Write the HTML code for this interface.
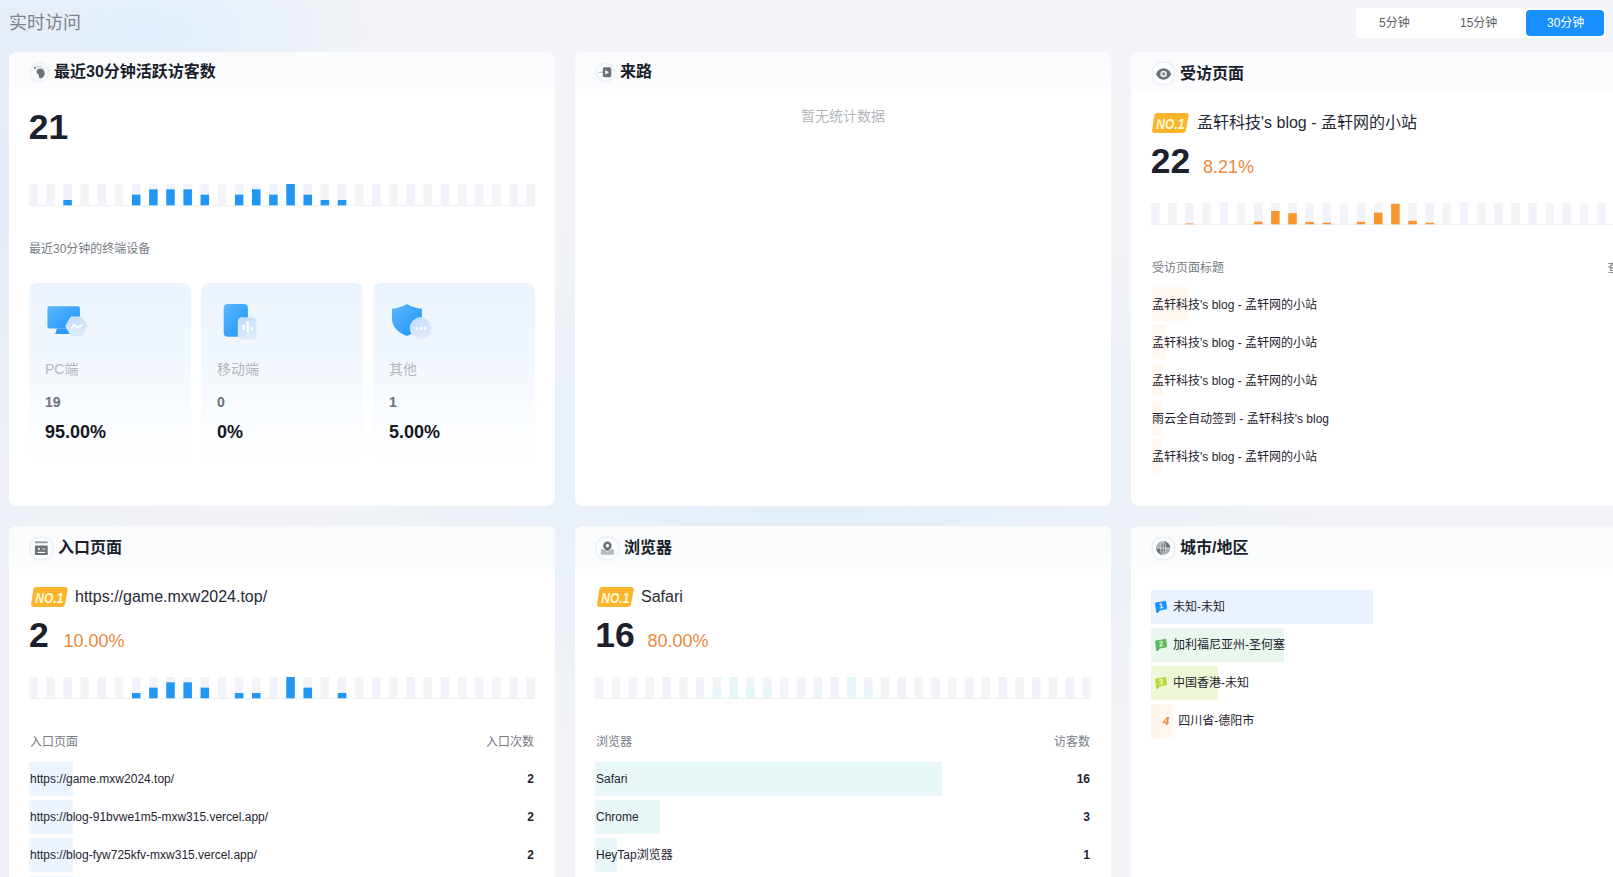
<!DOCTYPE html>
<html lang="zh-CN">
<head>
<meta charset="utf-8">
<title>实时访问</title>
<style>
*{box-sizing:border-box;margin:0;padding:0}
html,body{width:1613px;height:877px;overflow:hidden}
body{position:relative;font-family:"Liberation Sans","Noto Sans CJK SC",sans-serif;color:#1f2430;
background:
 radial-gradient(ellipse 240px 120px at 140px 34px, #e1eefb 0%, rgba(225,238,251,0) 100%),
 radial-gradient(ellipse 130px 300px at 0px 190px, #e4e9f8 0%, rgba(228,233,248,0) 100%),
 radial-gradient(ellipse 540px 300px at 810px 480px, #e2eefa 0%, rgba(226,238,250,0) 100%),
 linear-gradient(90deg,#eef1f7 0px,#f3f4f7 320px,#f3f4f7 100%);
}
.t{position:absolute;white-space:nowrap;line-height:1}
.card{position:absolute;background:#fff;border-radius:8px;overflow:hidden}
.hd{position:absolute;left:0;top:0;right:0;background:linear-gradient(180deg,#f9fbfd 0%,#fafcfe 82%,#ffffff 100%)}
.h40{height:40.500px}.h43{height:44.500px}
.chart{position:absolute;display:block}
.ic{position:absolute;border-radius:50%;background:#fcfdfe;border:1px solid #eceff3;box-shadow:0 0 2px rgba(200,205,215,.35)}
.ttl{font-size:16px;font-weight:bold;color:#1a1e2b}
.big{font-size:35.5px;font-weight:bold;color:#1b202c;letter-spacing:0}
.pct{font-size:18px;color:#ee8a3c}
.top1{font-size:16px;color:#252a36}
.th{font-size:12px;color:#767b85}
.td{font-size:12px;color:#1f2430}
.num{font-size:12px;font-weight:bold;color:#1f2430;text-align:right}
.rowbg{position:absolute;height:34px}
.badge{position:absolute;width:37px;height:20px}
.dev{position:absolute;width:162px;height:182px;top:283px;border-radius:8px;background:linear-gradient(180deg,#ebf4fd 0%,#f1f7fe 40%,#f9fcff 72%,#ffffff 100%)}
.seg{position:absolute;left:1356px;top:8px;width:250px;height:30px;background:#fff;border-radius:4px}
.segon{position:absolute;left:1526px;top:10px;width:78px;height:26px;background:#1890ff;border-radius:4px}
.st{font-size:12px;color:#5a5e66}

</style>
</head>
<body>
<div class="t" style="left:9px;top:14px;font-size:18px;color:#7d828a">实时访问</div>
<div class="seg"></div><div class="segon"></div>
<div class="t st" style="left:1379px;top:17px">5分钟</div>
<div class="t st" style="left:1460px;top:17px">15分钟</div>
<div class="t st" style="left:1547px;top:17px;color:#fff">30分钟</div>

<!-- card 1 -->
<div class="card" style="left:9px;top:52px;width:546px;height:454px"><div class="hd h40"></div></div>
<div class="ic" style="left:29.500px;top:62.500px;width:19px;height:19px"></div>
<svg class="chart" style="left:33px;top:65px" width="14" height="15" viewBox="0 0 14 15"><path d="M6.900 3.600C4.600 3.600 3.300 5.400 3.500 7.200C3.700 8.600 5.400 9 5.800 10.100C6.200 11.300 5.600 13.400 7.400 13.400C9.700 13.400 11.700 10.800 11.700 8.200C11.700 5.600 9.800 3.600 6.900 3.600Z" fill="#6d7078"/><circle cx="2.100" cy="2.900" r="1.300" fill="#9a9da4"/><circle cx="4.800" cy="1.500" r="0.850" fill="#a5a8ae"/><circle cx="7" cy="1.100" r="0.700" fill="#adb0b5"/><circle cx="9" cy="1.900" r="0.700" fill="#adb0b5"/><circle cx="11" cy="3.300" r="0.600" fill="#b0b3b8"/></svg>
<div class="t ttl" style="left:54px;top:64px">最近30分钟活跃访客数</div>
<div class="t big" style="left:28.800px;top:110px">21</div>
<svg class="chart" style="left:29.2px;top:184px" width="506.0" height="23.3" viewBox="0 0 506.0 23.3">
<rect x="0.00" y="0" width="8.5" height="21.3" fill="#f2f3fa"/>
<rect x="17.16" y="0" width="8.5" height="21.3" fill="#f3f4f7"/>
<rect x="34.31" y="0" width="8.5" height="21.3" fill="#f2f3fa"/>
<rect x="51.47" y="0" width="8.5" height="21.3" fill="#f3f4f7"/>
<rect x="68.62" y="0" width="8.5" height="21.3" fill="#f2f3fa"/>
<rect x="85.78" y="0" width="8.5" height="21.3" fill="#f3f4f7"/>
<rect x="102.93" y="0" width="8.5" height="21.3" fill="#f2f3fa"/>
<rect x="120.09" y="0" width="8.5" height="21.3" fill="#f3f4f7"/>
<rect x="137.24" y="0" width="8.5" height="21.3" fill="#f2f3fa"/>
<rect x="154.40" y="0" width="8.5" height="21.3" fill="#f3f4f7"/>
<rect x="171.55" y="0" width="8.5" height="21.3" fill="#f2f3fa"/>
<rect x="188.71" y="0" width="8.5" height="21.3" fill="#f3f4f7"/>
<rect x="205.86" y="0" width="8.5" height="21.3" fill="#f2f3fa"/>
<rect x="223.02" y="0" width="8.5" height="21.3" fill="#f3f4f7"/>
<rect x="240.17" y="0" width="8.5" height="21.3" fill="#f2f3fa"/>
<rect x="257.33" y="0" width="8.5" height="21.3" fill="#f3f4f7"/>
<rect x="274.48" y="0" width="8.5" height="21.3" fill="#f2f3fa"/>
<rect x="291.64" y="0" width="8.5" height="21.3" fill="#f3f4f7"/>
<rect x="308.79" y="0" width="8.5" height="21.3" fill="#f2f3fa"/>
<rect x="325.95" y="0" width="8.5" height="21.3" fill="#f3f4f7"/>
<rect x="343.10" y="0" width="8.5" height="21.3" fill="#f2f3fa"/>
<rect x="360.26" y="0" width="8.5" height="21.3" fill="#f3f4f7"/>
<rect x="377.41" y="0" width="8.5" height="21.3" fill="#f2f3fa"/>
<rect x="394.57" y="0" width="8.5" height="21.3" fill="#f3f4f7"/>
<rect x="411.72" y="0" width="8.5" height="21.3" fill="#f2f3fa"/>
<rect x="428.88" y="0" width="8.5" height="21.3" fill="#f3f4f7"/>
<rect x="446.03" y="0" width="8.5" height="21.3" fill="#f2f3fa"/>
<rect x="463.19" y="0" width="8.5" height="21.3" fill="#f3f4f7"/>
<rect x="480.34" y="0" width="8.5" height="21.3" fill="#f2f3fa"/>
<rect x="497.50" y="0" width="8.5" height="21.3" fill="#f3f4f7"/>
<rect x="0" y="21.1" width="506.0" height="1" fill="#edeff3"/>
<rect x="34.31" y="15.98" width="8.5" height="5.33" fill="#2196f3"/>
<rect x="102.93" y="10.65" width="8.5" height="10.65" fill="#2196f3"/>
<rect x="120.09" y="5.32" width="8.5" height="15.98" fill="#2196f3"/>
<rect x="137.24" y="5.32" width="8.5" height="15.98" fill="#2196f3"/>
<rect x="154.40" y="5.32" width="8.5" height="15.98" fill="#2196f3"/>
<rect x="171.55" y="10.65" width="8.5" height="10.65" fill="#2196f3"/>
<rect x="205.86" y="10.65" width="8.5" height="10.65" fill="#2196f3"/>
<rect x="223.02" y="5.32" width="8.5" height="15.98" fill="#2196f3"/>
<rect x="240.17" y="10.65" width="8.5" height="10.65" fill="#2196f3"/>
<rect x="257.33" y="0.00" width="8.5" height="21.30" fill="#2196f3"/>
<rect x="274.48" y="10.65" width="8.5" height="10.65" fill="#2196f3"/>
<rect x="291.64" y="15.98" width="8.5" height="5.33" fill="#2196f3"/>
<rect x="308.79" y="15.98" width="8.5" height="5.33" fill="#2196f3"/>
</svg>
<div class="t th" style="left:29px;top:243px">最近30分钟的终端设备</div>
<div class="dev" style="left:29px"></div>
<div class="dev" style="left:201px"></div>
<div class="dev" style="left:373px"></div>
<!-- device icons -->
<svg class="chart" style="left:44px;top:302px" width="48" height="42" viewBox="0 0 48 42">
<defs><linearGradient id="gb" x1="0" y1="0" x2="1" y2="1"><stop offset="0" stop-color="#5ab8ff"/><stop offset="1" stop-color="#1f93f7"/></linearGradient>
<linearGradient id="gl" x1="0" y1="0" x2="0" y2="1"><stop offset="0" stop-color="#cadffa"/><stop offset="1" stop-color="#deeafc"/></linearGradient></defs>
<rect x="3.400" y="4.200" width="32.500" height="22.300" rx="2.200" fill="url(#gb)"/>
<path d="M13 26.400h11l1.700 5.500H11.100z" fill="#2a9af8"/>
<path d="M43 24.200L37.750 33.300H27.250L22 24.200L27.250 15.100H37.750z" fill="url(#gl)" stroke="#d6e6fb" stroke-width="1.400" stroke-linejoin="round" fill-opacity=".97"/>
<path d="M27.900 25.900l2.300-3.400 2.900 3.400 5.100-2.800" fill="none" stroke="#fff" stroke-width="1.700" stroke-linecap="round" stroke-linejoin="round"/>
</svg>
<svg class="chart" style="left:216px;top:300px" width="48" height="44" viewBox="0 0 48 44">
<rect x="7.700" y="4" width="24.200" height="32.800" rx="4" fill="url(#gb)"/>
<rect x="22" y="17.400" width="18.200" height="22" rx="4" fill="url(#gl)" fill-opacity=".96" stroke="#e6f0fd" stroke-width=".4"/>
<rect x="26.600" y="24.500" width="2.200" height="6.200" rx="1.100" fill="#fff"/><rect x="30.600" y="21" width="2.200" height="12" rx="1.100" fill="#fff"/><rect x="34.600" y="26.500" width="2.200" height="4" rx="1.100" fill="#fff" fill-opacity=".85"/><circle cx="31.700" cy="35.700" r="1" fill="#fff"/>
</svg>
<svg class="chart" style="left:388px;top:300px" width="48" height="44" viewBox="0 0 48 44">
<path d="M4 8.800C9.500 8.200 15 6.500 18.900 4C22.800 6.500 28.400 8.200 33.900 8.800V19C33.900 27.500 27 33 18.900 36C10.900 33 4 27.500 4 19Z" fill="url(#gb)"/>
<circle cx="32.800" cy="28.200" r="10.700" fill="url(#gl)" fill-opacity=".96" stroke="#e6f0fd" stroke-width=".5"/>
<circle cx="28.600" cy="28.400" r="1.300" fill="#fff"/><circle cx="32.800" cy="28.400" r="1.300" fill="#fff"/><circle cx="37" cy="28.400" r="1.300" fill="#fff"/>
</svg>
<div class="t" style="left:45px;top:362px;font-size:14px;color:#b3b6bc">PC端</div>
<div class="t" style="left:217px;top:362px;font-size:14px;color:#b3b6bc">移动端</div>
<div class="t" style="left:389px;top:362px;font-size:14px;color:#b3b6bc">其他</div>
<div class="t" style="left:45px;top:395px;font-size:14px;font-weight:bold;color:#6b707b">19</div>
<div class="t" style="left:217px;top:395px;font-size:14px;font-weight:bold;color:#6b707b">0</div>
<div class="t" style="left:389px;top:395px;font-size:14px;font-weight:bold;color:#6b707b">1</div>
<div class="t" style="left:45px;top:423px;font-size:18px;font-weight:bold;color:#14171f">95.00%</div>
<div class="t" style="left:217px;top:423px;font-size:18px;font-weight:bold;color:#14171f">0%</div>
<div class="t" style="left:389px;top:423px;font-size:18px;font-weight:bold;color:#14171f">5.00%</div>

<!-- card 2 -->
<div class="card" style="left:575px;top:52px;width:536px;height:454px"><div class="hd h40"></div></div>
<div class="ic" style="left:595.800px;top:62.500px;width:19px;height:19px"></div>
<svg class="chart" style="left:597px;top:65px" width="16" height="14" viewBox="0 0 16 14"><path d="M1.300 7.300h5" stroke="#b9bcc2" stroke-width="1" fill="none"/><rect x="5.800" y="2.300" width="8.500" height="9.900" rx="1.600" fill="#6d7078"/><path d="M8.300 5l3.600 2.300-3.600 2.300z" fill="#fff"/></svg>
<div class="t ttl" style="left:620px;top:64px">来路</div>
<div class="t" style="left:801px;top:109px;font-size:14px;color:#b3b6bc">暂无统计数据</div>

<!-- card 3 -->
<div class="card" style="left:1131px;top:52px;width:546px;height:454px"><div class="hd h43"></div></div>
<div class="ic" style="left:1151.800px;top:62.300px;width:23px;height:23px;border-radius:10px"></div>
<svg class="chart" style="left:1155px;top:67px" width="17" height="14" viewBox="0 0 17 14"><path d="M.9 7C2.600 3.500 5.300 1.300 8.600 1.300S14.600 3.500 16.300 7c-1.700 3.500-4.400 5.700-7.700 5.700S2.600 10.500.9 7z" fill="#6d7078"/><circle cx="8.600" cy="7" r="3.300" fill="#e9ebee"/><circle cx="8.600" cy="7" r="1.700" fill="#8e9198"/></svg>
<div class="t ttl" style="left:1180px;top:66px">受访页面</div>
<svg class="badge" style="left:1152px;top:113px" viewBox="0 0 37 20"><path d="M4.800 0H34.300a2.400 2.400 0 0 1 2.350 2.900L33.900 17.500a3 3 0 0 1-2.900 2.500H2.500a2.400 2.400 0 0 1-2.350-2.900L2.300 2.300A3 3 0 0 1 4.800 0z" fill="#fbb42e"/><text transform="translate(18.300 15.800) scale(.8 1)" text-anchor="middle" font-family="Liberation Sans, sans-serif" font-size="15" font-weight="bold" font-style="italic" fill="#fffad4">NO.1</text></svg>
<div class="t top1" style="left:1197px;top:115px">孟轩科技's blog - 孟轩网的小站</div>
<div class="t big" style="left:1150.700px;top:144px">22</div>
<div class="t pct" style="left:1203px;top:157.500px">8.21%</div>
<svg class="chart" style="left:1151.4px;top:203px" width="506.0" height="23.3" viewBox="0 0 506.0 23.3">
<rect x="0.00" y="0" width="8.5" height="21.3" fill="#f2f3fa"/>
<rect x="17.16" y="0" width="8.5" height="21.3" fill="#f3f4f7"/>
<rect x="34.31" y="0" width="8.5" height="21.3" fill="#f2f3fa"/>
<rect x="51.47" y="0" width="8.5" height="21.3" fill="#f3f4f7"/>
<rect x="68.62" y="0" width="8.5" height="21.3" fill="#f2f3fa"/>
<rect x="85.78" y="0" width="8.5" height="21.3" fill="#f3f4f7"/>
<rect x="102.93" y="0" width="8.5" height="21.3" fill="#f2f3fa"/>
<rect x="120.09" y="0" width="8.5" height="21.3" fill="#f3f4f7"/>
<rect x="137.24" y="0" width="8.5" height="21.3" fill="#f2f3fa"/>
<rect x="154.40" y="0" width="8.5" height="21.3" fill="#f3f4f7"/>
<rect x="171.55" y="0" width="8.5" height="21.3" fill="#f2f3fa"/>
<rect x="188.71" y="0" width="8.5" height="21.3" fill="#f3f4f7"/>
<rect x="205.86" y="0" width="8.5" height="21.3" fill="#f2f3fa"/>
<rect x="223.02" y="0" width="8.5" height="21.3" fill="#f3f4f7"/>
<rect x="240.17" y="0" width="8.5" height="21.3" fill="#f2f3fa"/>
<rect x="257.33" y="0" width="8.5" height="21.3" fill="#f3f4f7"/>
<rect x="274.48" y="0" width="8.5" height="21.3" fill="#f2f3fa"/>
<rect x="291.64" y="0" width="8.5" height="21.3" fill="#f3f4f7"/>
<rect x="308.79" y="0" width="8.5" height="21.3" fill="#f2f3fa"/>
<rect x="325.95" y="0" width="8.5" height="21.3" fill="#f3f4f7"/>
<rect x="343.10" y="0" width="8.5" height="21.3" fill="#f2f3fa"/>
<rect x="360.26" y="0" width="8.5" height="21.3" fill="#f3f4f7"/>
<rect x="377.41" y="0" width="8.5" height="21.3" fill="#f2f3fa"/>
<rect x="394.57" y="0" width="8.5" height="21.3" fill="#f3f4f7"/>
<rect x="411.72" y="0" width="8.5" height="21.3" fill="#f2f3fa"/>
<rect x="428.88" y="0" width="8.5" height="21.3" fill="#f3f4f7"/>
<rect x="446.03" y="0" width="8.5" height="21.3" fill="#f2f3fa"/>
<rect x="463.19" y="0" width="8.5" height="21.3" fill="#f3f4f7"/>
<rect x="480.34" y="0" width="8.5" height="21.3" fill="#f2f3fa"/>
<rect x="497.50" y="0" width="8.5" height="21.3" fill="#f3f4f7"/>
<rect x="0" y="21.1" width="506.0" height="1" fill="#edeff3"/>
<rect x="34.31" y="20.50" width="8.5" height="0.80" fill="#f7962f"/>
<rect x="102.93" y="18.64" width="8.5" height="2.66" fill="#f7962f"/>
<rect x="120.09" y="7.99" width="8.5" height="13.31" fill="#f7962f"/>
<rect x="137.24" y="10.12" width="8.5" height="11.18" fill="#f7962f"/>
<rect x="154.40" y="18.90" width="8.5" height="2.40" fill="#f7962f"/>
<rect x="171.55" y="19.70" width="8.5" height="1.60" fill="#f7962f"/>
<rect x="205.86" y="18.90" width="8.5" height="2.40" fill="#f7962f"/>
<rect x="223.02" y="9.58" width="8.5" height="11.72" fill="#f7962f"/>
<rect x="240.17" y="0.80" width="8.5" height="20.50" fill="#f7962f"/>
<rect x="257.33" y="17.84" width="8.5" height="3.46" fill="#f7962f"/>
<rect x="274.48" y="19.70" width="8.5" height="1.60" fill="#f7962f"/>
</svg>
<div class="t th" style="left:1152px;top:262px">受访页面标题</div>
<div class="t th" style="left:1607.400px;top:262px">查看次数</div>
<div class="rowbg" style="left:1152px;top:287px;width:36px;background:#fff8f0"></div>
<div class="rowbg" style="left:1152px;top:325px;width:13.500px;background:#fff8f0"></div>
<div class="rowbg" style="left:1152px;top:363px;width:11px;background:#fff8f0"></div>
<div class="rowbg" style="left:1152px;top:401px;width:10px;background:#fff8f0"></div>
<div class="rowbg" style="left:1152px;top:439px;width:8.500px;background:#fff8f0"></div>
<div class="t td" style="left:1152px;top:299px">孟轩科技's blog - 孟轩网的小站</div>
<div class="t td" style="left:1152px;top:337px">孟轩科技's blog - 孟轩网的小站</div>
<div class="t td" style="left:1152px;top:375px">孟轩科技's blog - 孟轩网的小站</div>
<div class="t td" style="left:1152px;top:413px">雨云全自动签到 - 孟轩科技's blog</div>
<div class="t td" style="left:1152px;top:451px">孟轩科技's blog - 孟轩网的小站</div>

<!-- card 4 -->
<div class="card" style="left:9px;top:526px;width:546px;height:400px"><div class="hd h43"></div></div>
<div class="ic" style="left:30px;top:536.500px;width:23px;height:23px;border-radius:10px"></div>
<svg class="chart" style="left:34px;top:540px" width="15" height="16" viewBox="0 0 15 16"><rect x=".9" y="1.200" width="12.800" height="2.100" rx=".5" fill="#9b9ea5"/><rect x=".9" y="5.500" width="12.800" height="9.500" rx=".6" fill="#6d7078"/><circle cx="5" cy="9" r="1.100" fill="#fff"/><rect x="8" y="8.400" width="3.200" height="1.100" fill="#d9dbde"/><rect x="3.600" y="11.800" width="7.600" height="1.200" fill="#fff"/></svg>
<div class="t ttl" style="left:58px;top:540px">入口页面</div>
<svg class="badge" style="left:30.500px;top:587px" viewBox="0 0 37 20"><path d="M4.800 0H34.300a2.400 2.400 0 0 1 2.350 2.900L33.900 17.500a3 3 0 0 1-2.900 2.500H2.500a2.400 2.400 0 0 1-2.350-2.900L2.300 2.300A3 3 0 0 1 4.800 0z" fill="#fbb42e"/><text transform="translate(18.300 15.800) scale(.8 1)" text-anchor="middle" font-family="Liberation Sans, sans-serif" font-size="15" font-weight="bold" font-style="italic" fill="#fffad4">NO.1</text></svg>
<div class="t top1" style="left:75px;top:589px">https://game.mxw2024.top/</div>
<div class="t big" style="left:29px;top:618px">2</div>
<div class="t pct" style="left:63.500px;top:632px">10.00%</div>
<svg class="chart" style="left:29.2px;top:677px" width="506.0" height="23.3" viewBox="0 0 506.0 23.3">
<rect x="0.00" y="0" width="8.5" height="21.3" fill="#f2f3fa"/>
<rect x="17.16" y="0" width="8.5" height="21.3" fill="#f3f4f7"/>
<rect x="34.31" y="0" width="8.5" height="21.3" fill="#f2f3fa"/>
<rect x="51.47" y="0" width="8.5" height="21.3" fill="#f3f4f7"/>
<rect x="68.62" y="0" width="8.5" height="21.3" fill="#f2f3fa"/>
<rect x="85.78" y="0" width="8.5" height="21.3" fill="#f3f4f7"/>
<rect x="102.93" y="0" width="8.5" height="21.3" fill="#f2f3fa"/>
<rect x="120.09" y="0" width="8.5" height="21.3" fill="#f3f4f7"/>
<rect x="137.24" y="0" width="8.5" height="21.3" fill="#f2f3fa"/>
<rect x="154.40" y="0" width="8.5" height="21.3" fill="#f3f4f7"/>
<rect x="171.55" y="0" width="8.5" height="21.3" fill="#f2f3fa"/>
<rect x="188.71" y="0" width="8.5" height="21.3" fill="#f3f4f7"/>
<rect x="205.86" y="0" width="8.5" height="21.3" fill="#f2f3fa"/>
<rect x="223.02" y="0" width="8.5" height="21.3" fill="#f3f4f7"/>
<rect x="240.17" y="0" width="8.5" height="21.3" fill="#f2f3fa"/>
<rect x="257.33" y="0" width="8.5" height="21.3" fill="#f3f4f7"/>
<rect x="274.48" y="0" width="8.5" height="21.3" fill="#f2f3fa"/>
<rect x="291.64" y="0" width="8.5" height="21.3" fill="#f3f4f7"/>
<rect x="308.79" y="0" width="8.5" height="21.3" fill="#f2f3fa"/>
<rect x="325.95" y="0" width="8.5" height="21.3" fill="#f3f4f7"/>
<rect x="343.10" y="0" width="8.5" height="21.3" fill="#f2f3fa"/>
<rect x="360.26" y="0" width="8.5" height="21.3" fill="#f3f4f7"/>
<rect x="377.41" y="0" width="8.5" height="21.3" fill="#f2f3fa"/>
<rect x="394.57" y="0" width="8.5" height="21.3" fill="#f3f4f7"/>
<rect x="411.72" y="0" width="8.5" height="21.3" fill="#f2f3fa"/>
<rect x="428.88" y="0" width="8.5" height="21.3" fill="#f3f4f7"/>
<rect x="446.03" y="0" width="8.5" height="21.3" fill="#f2f3fa"/>
<rect x="463.19" y="0" width="8.5" height="21.3" fill="#f3f4f7"/>
<rect x="480.34" y="0" width="8.5" height="21.3" fill="#f2f3fa"/>
<rect x="497.50" y="0" width="8.5" height="21.3" fill="#f3f4f7"/>
<rect x="0" y="21.1" width="506.0" height="1" fill="#edeff3"/>
<rect x="102.93" y="15.98" width="8.5" height="5.33" fill="#2196f3"/>
<rect x="120.09" y="10.65" width="8.5" height="10.65" fill="#2196f3"/>
<rect x="137.24" y="5.32" width="8.5" height="15.98" fill="#2196f3"/>
<rect x="154.40" y="5.32" width="8.5" height="15.98" fill="#2196f3"/>
<rect x="171.55" y="10.65" width="8.5" height="10.65" fill="#2196f3"/>
<rect x="205.86" y="15.98" width="8.5" height="5.33" fill="#2196f3"/>
<rect x="223.02" y="15.98" width="8.5" height="5.33" fill="#2196f3"/>
<rect x="257.33" y="0.00" width="8.5" height="21.30" fill="#2196f3"/>
<rect x="274.48" y="10.65" width="8.5" height="10.65" fill="#2196f3"/>
<rect x="308.79" y="15.98" width="8.5" height="5.33" fill="#2196f3"/>
</svg>
<div class="t th" style="left:30px;top:736px">入口页面</div>
<div class="t th" style="left:486px;top:736px">入口次数</div>
<div class="rowbg" style="left:29px;top:762px;width:44px;background:#ecf4fe"></div>
<div class="rowbg" style="left:29px;top:800px;width:44px;background:#ecf4fe"></div>
<div class="rowbg" style="left:29px;top:838px;width:44px;background:#ecf4fe"></div>
<div class="rowbg" style="left:29px;top:876px;width:44px;background:#ecf4fe"></div>
<div class="t td" style="left:30px;top:773px">https://game.mxw2024.top/</div>
<div class="t td" style="left:30px;top:811px">https://blog-91bvwe1m5-mxw315.vercel.app/</div>
<div class="t td" style="left:30px;top:849px">https://blog-fyw725kfv-mxw315.vercel.app/</div>
<div class="t td" style="left:30px;top:887px">https://blog.mxw2024.top/</div>
<div class="t num" style="left:504px;width:30px;top:773px">2</div>
<div class="t num" style="left:504px;width:30px;top:811px">2</div>
<div class="t num" style="left:504px;width:30px;top:849px">2</div>

<!-- card 5 -->
<div class="card" style="left:575px;top:526px;width:536px;height:400px"><div class="hd h43"></div></div>
<div class="ic" style="left:596px;top:536.500px;width:23px;height:23px;border-radius:10px"></div>
<svg class="chart" style="left:600px;top:540px" width="15" height="16" viewBox="0 0 15 16"><path d="M.9 8.800l4 1.200 2.500 2.600 2.500-2.600 4-1.200v6H.9z" fill="#b4b7bc"/><path d="M7.400 1.500a4.200 4.200 0 0 1 4.200 4.200c0 2.300-2.200 4.200-4.200 5.500C5.400 9.900 3.200 8 3.200 5.700A4.200 4.200 0 0 1 7.400 1.500z" fill="#6d7078"/><circle cx="7.400" cy="5.700" r="1.700" fill="#fff"/></svg>
<div class="t ttl" style="left:624px;top:540px">浏览器</div>
<svg class="badge" style="left:596.500px;top:587px" viewBox="0 0 37 20"><path d="M4.800 0H34.300a2.400 2.400 0 0 1 2.350 2.900L33.900 17.500a3 3 0 0 1-2.900 2.500H2.500a2.400 2.400 0 0 1-2.350-2.900L2.300 2.300A3 3 0 0 1 4.800 0z" fill="#fbb42e"/><text transform="translate(18.300 15.800) scale(.8 1)" text-anchor="middle" font-family="Liberation Sans, sans-serif" font-size="15" font-weight="bold" font-style="italic" fill="#fffad4">NO.1</text></svg>
<div class="t top1" style="left:641px;top:589px">Safari</div>
<div class="t big" style="left:595.300px;top:618px">16</div>
<div class="t pct" style="left:647.500px;top:632px">80.00%</div>
<svg class="chart" style="left:595.2px;top:677px" width="496.0" height="23.3" viewBox="0 0 496.0 23.3">
<rect x="0.00" y="0" width="8.5" height="21.3" fill="#f2f3fa"/>
<rect x="16.81" y="0" width="8.5" height="21.3" fill="#f3f4f7"/>
<rect x="33.62" y="0" width="8.5" height="21.3" fill="#f2f3fa"/>
<rect x="50.43" y="0" width="8.5" height="21.3" fill="#f3f4f7"/>
<rect x="67.24" y="0" width="8.5" height="21.3" fill="#f2f3fa"/>
<rect x="84.05" y="0" width="8.5" height="21.3" fill="#f3f4f7"/>
<rect x="100.86" y="0" width="8.5" height="21.3" fill="#f2f3fa"/>
<rect x="117.67" y="0" width="8.5" height="21.3" fill="#f3f4f7"/>
<rect x="134.48" y="0" width="8.5" height="21.3" fill="#f2f3fa"/>
<rect x="151.29" y="0" width="8.5" height="21.3" fill="#f3f4f7"/>
<rect x="168.10" y="0" width="8.5" height="21.3" fill="#f2f3fa"/>
<rect x="184.91" y="0" width="8.5" height="21.3" fill="#f3f4f7"/>
<rect x="201.72" y="0" width="8.5" height="21.3" fill="#f2f3fa"/>
<rect x="218.53" y="0" width="8.5" height="21.3" fill="#f3f4f7"/>
<rect x="235.34" y="0" width="8.5" height="21.3" fill="#f2f3fa"/>
<rect x="252.16" y="0" width="8.5" height="21.3" fill="#f3f4f7"/>
<rect x="268.97" y="0" width="8.5" height="21.3" fill="#f2f3fa"/>
<rect x="285.78" y="0" width="8.5" height="21.3" fill="#f3f4f7"/>
<rect x="302.59" y="0" width="8.5" height="21.3" fill="#f2f3fa"/>
<rect x="319.40" y="0" width="8.5" height="21.3" fill="#f3f4f7"/>
<rect x="336.21" y="0" width="8.5" height="21.3" fill="#f2f3fa"/>
<rect x="353.02" y="0" width="8.5" height="21.3" fill="#f3f4f7"/>
<rect x="369.83" y="0" width="8.5" height="21.3" fill="#f2f3fa"/>
<rect x="386.64" y="0" width="8.5" height="21.3" fill="#f3f4f7"/>
<rect x="403.45" y="0" width="8.5" height="21.3" fill="#f2f3fa"/>
<rect x="420.26" y="0" width="8.5" height="21.3" fill="#f3f4f7"/>
<rect x="437.07" y="0" width="8.5" height="21.3" fill="#f2f3fa"/>
<rect x="453.88" y="0" width="8.5" height="21.3" fill="#f3f4f7"/>
<rect x="470.69" y="0" width="8.5" height="21.3" fill="#f2f3fa"/>
<rect x="487.50" y="0" width="8.5" height="21.3" fill="#f3f4f7"/>
<rect x="0" y="21.1" width="496.0" height="1" fill="#edeff3"/>
<rect x="117.67" y="10.65" width="8.5" height="10.65" fill="#e7f6f6"/>
<rect x="134.48" y="0.00" width="8.5" height="21.30" fill="#e7f6f6"/>
<rect x="151.29" y="5.32" width="8.5" height="15.98" fill="#e7f6f6"/>
<rect x="168.10" y="10.65" width="8.5" height="10.65" fill="#e7f6f6"/>
<rect x="218.53" y="15.98" width="8.5" height="5.33" fill="#e7f6f6"/>
<rect x="252.16" y="0.00" width="8.5" height="21.30" fill="#e7f6f6"/>
<rect x="268.97" y="10.65" width="8.5" height="10.65" fill="#e7f6f6"/>
</svg>
<div class="t th" style="left:596px;top:736px">浏览器</div>
<div class="t th" style="left:1054px;top:736px">访客数</div>
<div class="rowbg" style="left:595px;top:762px;width:346.500px;background:#e8f8f8"></div>
<div class="rowbg" style="left:595px;top:800px;width:65px;background:#e8f8f8"></div>
<div class="rowbg" style="left:595px;top:838px;width:21.600px;background:#e8f8f8"></div>
<div class="t td" style="left:596px;top:773px">Safari</div>
<div class="t td" style="left:596px;top:811px">Chrome</div>
<div class="t td" style="left:596px;top:849px">HeyTap浏览器</div>
<div class="t num" style="left:1060px;width:30px;top:773px">16</div>
<div class="t num" style="left:1060px;width:30px;top:811px">3</div>
<div class="t num" style="left:1060px;width:30px;top:849px">1</div>

<!-- card 6 -->
<div class="card" style="left:1131px;top:526px;width:546px;height:400px"><div class="hd h43"></div></div>
<div class="ic" style="left:1151.800px;top:536.500px;width:23px;height:23px;border-radius:10px"></div>
<svg class="chart" style="left:1155px;top:540px" width="16" height="16" viewBox="0 0 16 16"><circle cx="8.200" cy="8.100" r="7" fill="#a9acb2"/><path d="M8.200 1.100a7 7 0 0 1 7 7h-7z" fill="#6d7078"/><path d="M8.200 15.100a7 7 0 0 1-7-7h7z" fill="#6d7078"/><ellipse cx="8.200" cy="8.100" rx="2.600" ry="7" fill="#777a82" stroke="#e4e6e9" stroke-width=".8"/><path d="M1.200 8.100h14M8.200 1.100v14" stroke="#e4e6e9" stroke-width=".8"/></svg>
<div class="t ttl" style="left:1180px;top:540px">城市/地区</div>
<div class="rowbg" style="left:1151.300px;top:590px;width:222px;background:#e9f2fe"></div>
<div class="rowbg" style="left:1151.300px;top:628px;width:133px;background:#e8f8ef"></div>
<div class="rowbg" style="left:1151.300px;top:666px;width:66.500px;background:#eff8d6"></div>
<div class="rowbg" style="left:1151.300px;top:704px;width:21.500px;background:linear-gradient(90deg,#fff4e8,#fff9f2)"></div>
<svg class="chart" style="left:1154px;top:600px" width="15" height="15" viewBox="0 0 15 15"><path d="M1.600 3.100L11.700 1.400L12.500 8.800L5.400 10.100L3.400 12.900L2.500 10.600Z" fill="#1890ff" stroke="#1890ff" stroke-width="1" stroke-linejoin="round"/><path d="M2.300 10.700L3.400 13.100L4.700 10.500Z" fill="#0d74da"/><text x="7" y="8.300" text-anchor="middle" font-family="Liberation Sans, sans-serif" font-size="7.500" font-weight="bold" fill="#ffffff" transform="rotate(-8 7 6)">1</text></svg>
<svg class="chart" style="left:1154px;top:638px" width="15" height="15" viewBox="0 0 15 15"><path d="M1.600 3.100L11.700 1.400L12.500 8.800L5.400 10.100L3.400 12.900L2.500 10.600Z" fill="#5cb85c" stroke="#5cb85c" stroke-width="1" stroke-linejoin="round"/><path d="M2.300 10.700L3.400 13.100L4.700 10.500Z" fill="#409a48"/><text x="7" y="8.300" text-anchor="middle" font-family="Liberation Sans, sans-serif" font-size="7.500" font-weight="bold" fill="#e6f7e4" transform="rotate(-8 7 6)">2</text></svg>
<svg class="chart" style="left:1154px;top:676px" width="15" height="15" viewBox="0 0 15 15"><path d="M1.600 3.100L11.700 1.400L12.500 8.800L5.400 10.100L3.400 12.900L2.500 10.600Z" fill="#bdd843" stroke="#bdd843" stroke-width="1" stroke-linejoin="round"/><path d="M2.300 10.700L3.400 13.100L4.700 10.500Z" fill="#a3bf30"/><text x="7" y="8.300" text-anchor="middle" font-family="Liberation Sans, sans-serif" font-size="7.500" font-weight="bold" fill="#f2f8d2" transform="rotate(-8 7 6)">3</text></svg>
<div class="t" style="left:1163px;top:715.500px;font-size:11.500px;font-weight:bold;font-style:italic;color:#ee8a3c">4</div>
<div class="t td" style="left:1173px;top:601px">未知-未知</div>
<div class="t td" style="left:1173px;top:639px">加利福尼亚州-圣何塞</div>
<div class="t td" style="left:1173px;top:677px">中国香港-未知</div>
<div class="t td" style="left:1178.300px;top:715px">四川省-德阳市</div>

</body>
</html>
